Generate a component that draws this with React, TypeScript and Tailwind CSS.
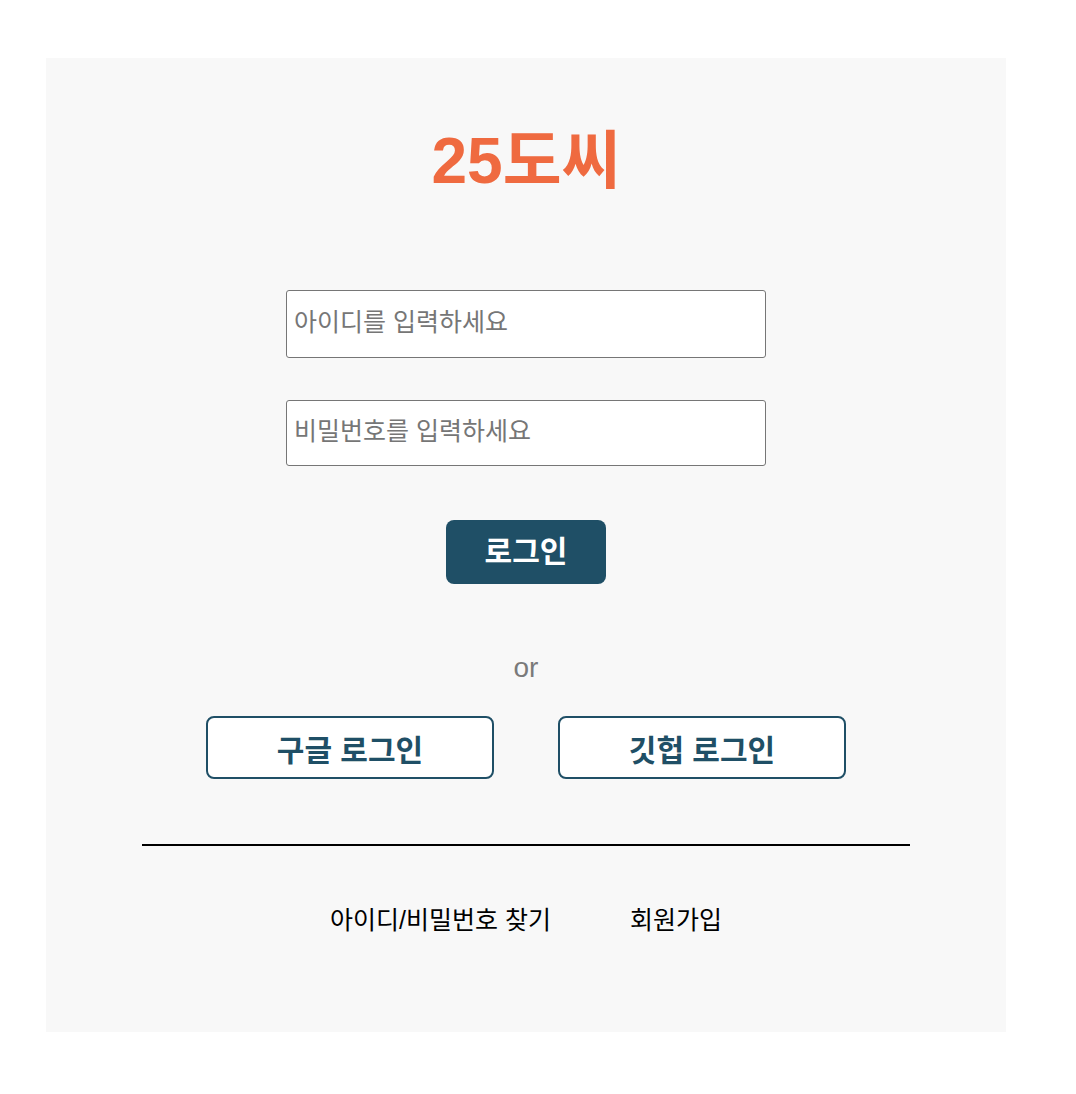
import React from "react";

const font = { fontFamily: '"Liberation Sans", "Noto Sans CJK KR", sans-serif' };

const App = () => {
  return (
    <div className="min-h-screen bg-white pt-[58px]" style={font}>
      <div className="mx-[46px] w-[960px] bg-[#f8f8f8] flex flex-col items-center pt-[112px] pb-[94px]">
        <h1 className="text-[64px] leading-[96px] font-bold text-[#ef6a40] -mt-[57px] mb-[81px]">25도씨</h1>

        <input
          type="text"
          placeholder="아이디를 입력하세요"
          className="w-[480px] h-[68px] bg-white border border-[#767676] rounded-[3px] px-[7px] pb-[4px] text-[25px] placeholder:text-[#767676] outline-none"
        />
        <input
          type="password"
          placeholder="비밀번호를 입력하세요"
          className="mt-[42px] w-[480px] h-[66px] bg-white border border-[#767676] rounded-[3px] px-[7px] pb-[4px] text-[25px] placeholder:text-[#767676] outline-none"
        />

        <button className="mt-[54px] w-[160px] h-[64px] rounded-[8px] bg-[#1f4f66] text-white text-[30px] font-bold pb-[2px]">
          로그인
        </button>

        <p className="mt-[64px] text-[28px] leading-[40px] text-[#7a7a7a]">or</p>

        <div className="mt-[28px] flex gap-[64px]">
          <button className="w-[288px] h-[63px] rounded-[8px] border-2 border-[#1f4f66] bg-white text-[#1f4f66] text-[30px] font-bold pt-[6px]">
            구글 로그인
          </button>
          <button className="w-[288px] h-[63px] rounded-[8px] border-2 border-[#1f4f66] bg-white text-[#1f4f66] text-[30px] font-bold pt-[6px]">
            깃헙 로그인
          </button>
        </div>

        <hr className="mt-[65px] w-[768px] border-0 h-[2px] bg-black" />

        <div className="mt-[56px] flex gap-[79px] text-[25px] leading-[36px] text-black">
          <a href="#">아이디/비밀번호 찾기</a>
          <a href="#">회원가입</a>
        </div>
      </div>
    </div>
  );
};

export default App;
